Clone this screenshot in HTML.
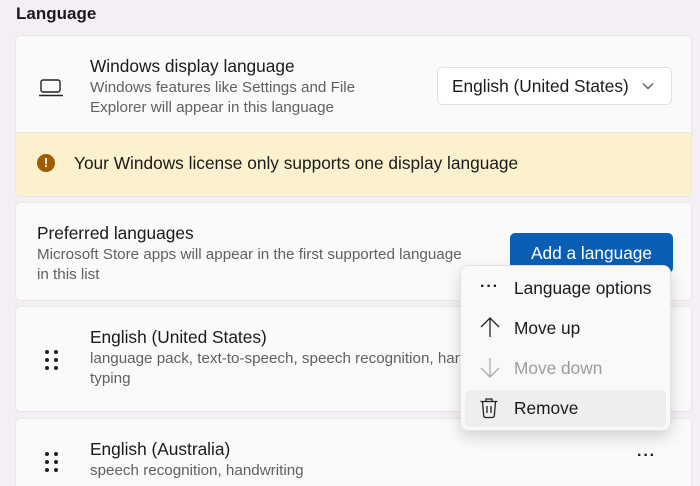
<!DOCTYPE html><html><head><style>
html,body{margin:0;width:700px;height:486px;overflow:hidden}
body{background:#f4eff4;font-family:"Segoe UI","Liberation Sans",sans-serif;color:#1a1a1a;position:relative}
.a{position:absolute}
.card{position:absolute;left:15px;width:677px;background:#fbfafb;border:1px solid #e8e4e8;border-radius:5px;box-sizing:border-box}
.t{font-size:17.3px;color:#1a1a1a;white-space:nowrap}
.s{font-size:15.2px;color:#606060;line-height:20px;white-space:nowrap}
.dots{position:absolute;width:16px;height:24px}
.dots i{position:absolute;width:3.5px;height:3.5px;border-radius:2px;background:#222}
</style></head><body>
<div class="a t" style="left:16px;top:4px;font-size:17px;font-weight:600">Language</div>
<div class="card" style="top:35px;height:162px;overflow:hidden">
 <div class="a" style="left:0;top:96px;width:677px;height:66px;background:#fbf1cf;border-top:1px solid #efe6c6"></div>
 <svg class="a" style="left:22px;top:42px" width="26" height="20"><rect x="3" y="2" width="19" height="12" rx="2" fill="none" stroke="#222" stroke-width="1.4"/><line x1="1" y1="17.5" x2="25" y2="17.5" stroke="#222" stroke-width="1.4"/></svg>
 <div class="a t" style="left:74px;top:20px">Windows display language</div>
 <div class="a s" style="left:74px;top:42px">Windows features like Settings and File<br>Explorer will appear in this language</div>
 <div class="a" style="left:421px;top:31px;width:235px;height:38px;background:#fff;border:1px solid #e2dfe2;border-radius:5px;box-sizing:border-box"></div>
 <div class="a t" style="left:436px;top:40px">English (United States)</div>
 <svg class="a" style="left:626px;top:46px" width="12" height="8"><path d="M1 1.5l5 5 5-5" fill="none" stroke="#444" stroke-width="1.2"/></svg>
 <div class="a" style="left:21px;top:118px;width:18px;height:18px;border-radius:9px;background:#9d5d00;color:#fff;font-size:13px;font-weight:bold;text-align:center;line-height:18px">!</div>
 <div class="a t" style="left:58px;top:117px">Your Windows license only supports one display language</div>
</div>
<div class="card" style="top:202px;height:99px">
 <div class="a t" style="left:21px;top:20px">Preferred languages</div>
 <div class="a s" style="left:21px;top:42px">Microsoft Store apps will appear in the first supported language<br>in this list</div>
 <div class="a" style="left:494px;top:30px;width:163px;height:40px;background:#0a5fb4;border-radius:5px;color:#fff;font-size:17.3px;text-align:center;line-height:40px">Add a language</div>
</div>
<div class="card" style="top:306px;height:106px">
 <div class="dots" style="left:28px;top:42px"><i style="left:1px;top:1px"></i><i style="left:10px;top:1px"></i><i style="left:1px;top:9px"></i><i style="left:10px;top:9px"></i><i style="left:1px;top:17px"></i><i style="left:10px;top:17px"></i></div>
 <div class="a t" style="left:74px;top:20px">English (United States)</div>
 <div class="a s" style="left:74px;top:42px">language pack, text-to-speech, speech recognition, handwriting,<br>typing</div>
</div>
<div class="card" style="top:418px;height:80px">
 <div class="dots" style="left:28px;top:32px"><i style="left:1px;top:1px"></i><i style="left:10px;top:1px"></i><i style="left:1px;top:9px"></i><i style="left:10px;top:9px"></i><i style="left:1px;top:17px"></i><i style="left:10px;top:17px"></i></div>
 <div class="a t" style="left:74px;top:20px">English (Australia)</div>
 <div class="a s" style="left:74px;top:42px">speech recognition, handwriting</div>
 <div class="a t" style="left:621px;top:28px;font-size:16px;letter-spacing:1px;font-weight:bold">···</div>
</div>
<div class="a" style="left:460px;top:265px;width:211px;height:166px;background:#f9f9fa;border:1px solid #e2e2e4;border-radius:8px;box-shadow:0 6px 16px rgba(0,0,0,.16);box-sizing:border-box">
 <div class="a" style="left:4px;top:124px;width:201px;height:37px;background:#eeeeef;border-radius:5px"></div>
 <div class="a t" style="left:19px;top:12px;font-size:16px;font-weight:bold;letter-spacing:1px">···</div>
 <div class="a t" style="left:53px;top:12px">Language options</div>
 <svg class="a" style="left:18px;top:50px" width="22" height="22"><path d="M11 21V2M2 11l9-9 9 9" fill="none" stroke="#222" stroke-width="1.3"/></svg>
 <div class="a t" style="left:53px;top:52px">Move up</div>
 <svg class="a" style="left:18px;top:91px" width="22" height="22"><path d="M11 1v19M2 11l9 9 9-9" fill="none" stroke="#aaa" stroke-width="1.3"/></svg>
 <div class="a t" style="left:53px;top:92px;color:#9c9c9c">Move down</div>
 <svg class="a" style="left:18px;top:131px" width="20" height="22"><path d="M1.5 4.5h17M7 4.5V2h6v2.5M3.5 4.5l1.2 14.5a2 2 0 002 1.5h6.6a2 2 0 002-1.5l1.2-14.5M8 9v7M12 9v7" fill="none" stroke="#222" stroke-width="1.3"/></svg>
 <div class="a t" style="left:53px;top:132px">Remove</div>
</div>
</body></html>
